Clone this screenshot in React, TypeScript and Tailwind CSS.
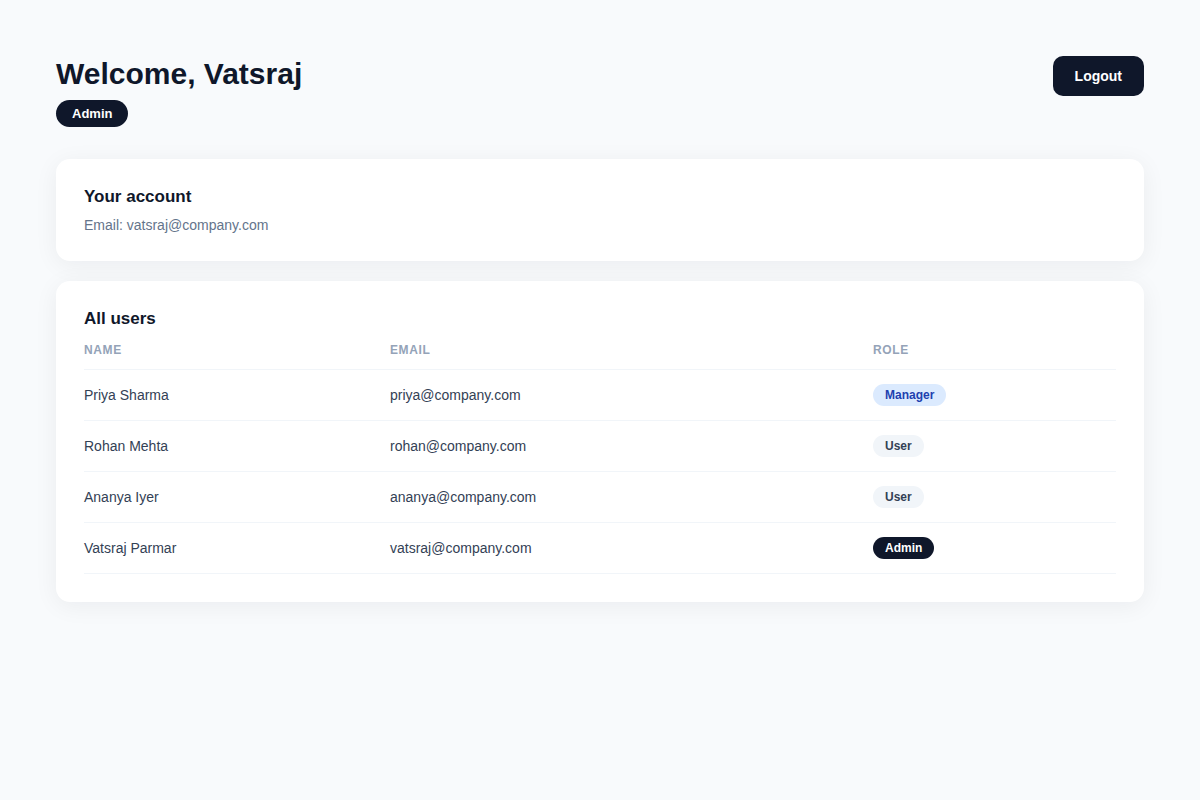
import React from "react";

type Role = "Manager" | "User" | "Admin";

const users: { name: string; email: string; role: Role }[] = [
  { name: "Priya Sharma", email: "priya@company.com", role: "Manager" },
  { name: "Rohan Mehta", email: "rohan@company.com", role: "User" },
  { name: "Ananya Iyer", email: "ananya@company.com", role: "User" },
  { name: "Vatsraj Parmar", email: "vatsraj@company.com", role: "Admin" },
];

const roleStyles: Record<Role, string> = {
  Manager: "bg-[#dbeafe] text-[#1e40af]",
  User: "bg-[#f1f5f9] text-[#334155]",
  Admin: "bg-[#0f172a] text-white",
};

function RoleBadge({ role }: { role: Role }) {
  return (
    <span
      className={`inline-flex h-[22px] items-center rounded-full px-3 text-[12px] font-bold ${roleStyles[role]}`}
    >
      {role}
    </span>
  );
}

export default function App() {
  return (
    <div
      className="min-h-[800px] bg-[#f8fafc] px-14 pt-14 text-[#0f172a]"
      style={{ fontFamily: '"Liberation Sans", Arial, sans-serif' }}
    >
      <header className="flex items-start justify-between">
        <div>
          <h1 className="text-[30px] font-bold leading-[36px]">Welcome, Vatsraj</h1>
          <span className="mt-2 inline-flex h-[27px] items-center rounded-full bg-[#0f172a] px-4 text-[13px] font-bold text-white">
            Admin
          </span>
        </div>
        <button className="h-10 rounded-[10px] bg-[#0f172a] px-[22px] text-[14px] font-bold text-white">
          Logout
        </button>
      </header>

      <section className="mt-8 rounded-[14px] bg-white px-7 pb-[26px] pt-7 shadow-[0_4px_24px_rgba(15,23,42,0.06)]">
        <h2 className="text-[17px] font-bold leading-5">Your account</h2>
        <p className="mt-2 text-[14px] leading-5 text-[#64748b]">Email: vatsraj@company.com</p>
      </section>

      <section className="mt-5 rounded-[14px] bg-white px-7 pb-7 pt-7 shadow-[0_4px_24px_rgba(15,23,42,0.06)]">
        <h2 className="text-[17px] font-bold leading-5">All users</h2>
        <div className="mt-3">
          <div className="grid h-[29px] grid-cols-[306px_483px_1fr] items-start border-b border-[#f1f5f9] text-[12px] font-bold uppercase tracking-[0.6px] text-[#94a3b8]">
            <div>Name</div>
            <div>Email</div>
            <div>Role</div>
          </div>
          {users.map((u) => (
            <div
              key={u.email}
              className="grid h-[51px] grid-cols-[306px_483px_1fr] items-center border-b border-[#f1f5f9] text-[14px] text-[#334155]"
            >
              <div>{u.name}</div>
              <div>{u.email}</div>
              <div>
                <RoleBadge role={u.role} />
              </div>
            </div>
          ))}
        </div>
      </section>
    </div>
  );
}
